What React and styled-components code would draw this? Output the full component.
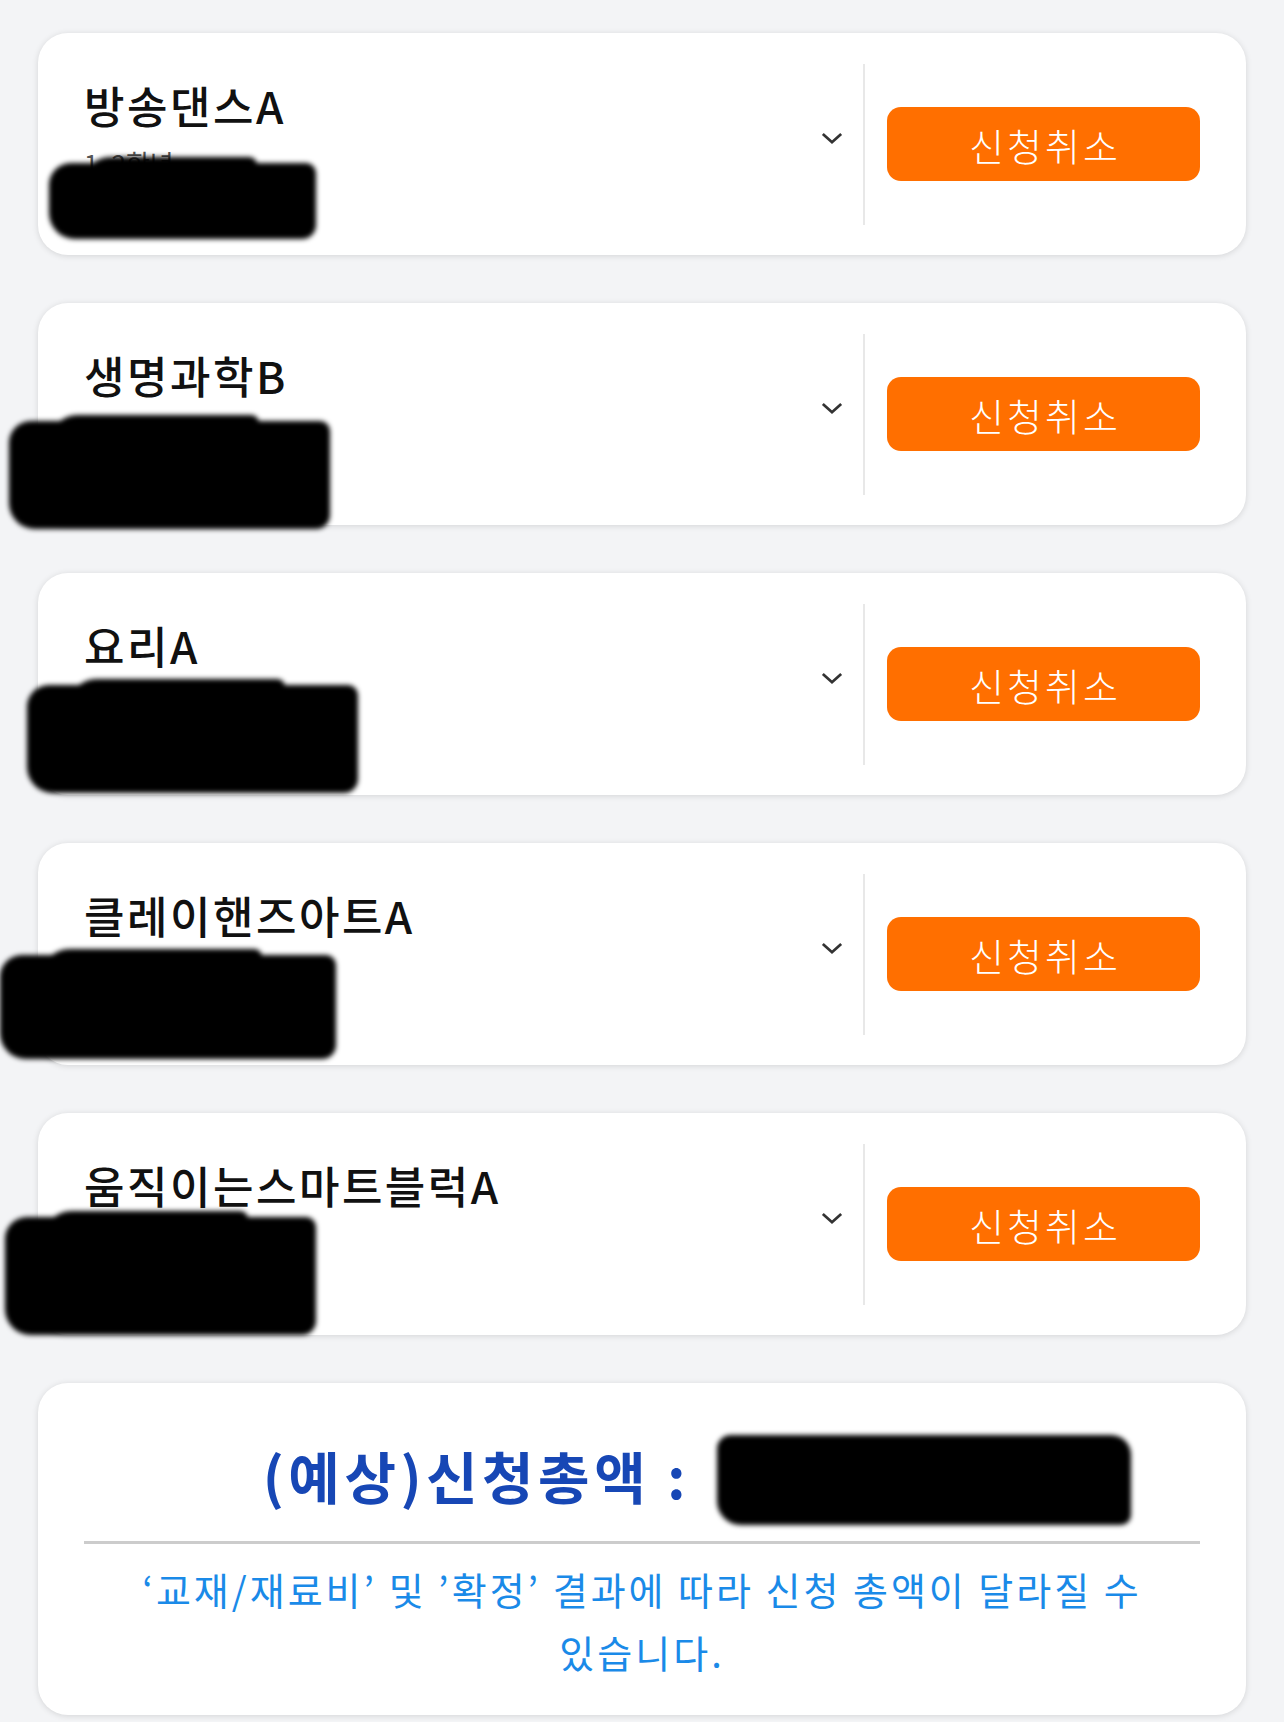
import React from 'react';
import styled, { createGlobalStyle } from 'styled-components';

const GlobalStyle = createGlobalStyle`
  html, body {
    margin: 0;
    padding: 0;
    background: #f3f4f6;
  }
  body {
    font-family: 'Noto Sans CJK KR', 'Noto Sans', sans-serif;
    color: #111;
  }
`;

const courses = [
  { name: '방송댄스A', grade: '1, 2학년', blot: { l: 11, t: 130, w: 267, h: 76 } },
  { name: '생명과학B', grade: '3, 4학년', blot: { l: -29, t: 118, w: 321, h: 108 } },
  { name: '요리A', grade: '1, 2학년', blot: { l: -11, t: 112, w: 331, h: 108 } },
  { name: '클레이핸즈아트A', grade: '1, 2학년', blot: { l: -38, t: 112, w: 336, h: 104 } },
  { name: '움직이는스마트블럭A', grade: '1, 2학년', blot: { l: -33, t: 104, w: 311, h: 118 } },
];

export default function App() {
  return (
    <Page>
      <GlobalStyle />
      {courses.map((c) => (
        <Card key={c.name}>
          <Info>
            <Title>{c.name}</Title>
            <Grade>{c.grade}</Grade>
          </Info>
          <Chevron viewBox='0 0 24 14' aria-hidden>
            <path d='M2 2 L12 11 L22 2' fill='none' stroke='#333' strokeWidth='3' />
          </Chevron>
          <Divider />
          <CancelButton type='button'>신청취소</CancelButton>
          <Blot $l={c.blot.l} $t={c.blot.t} $w={c.blot.w} $h={c.blot.h} />
        </Card>
      ))}
      <Summary>
        <Total>
          (예상)신청총액 : <Amount>000,000원</Amount>
        </Total>
        <Rule />
        <Note>‘교재/재료비’ 및 ’확정’ 결과에 따라 신청 총액이 달라질 수 있습니다.</Note>
      </Summary>
    </Page>
  );
}

const Page = styled.div`
  display: flex;
  flex-direction: column;
  gap: 48px;
  padding: 33px 38px 6px;
`;

const Card = styled.div`
  position: relative;
  display: flex;
  align-items: center;
  height: 222px;
  padding: 0 46px 0 46px;
  background: #fff;
  border-radius: 30px;
  box-shadow: 0 1px 6px rgba(0, 0, 0, 0.13);
  box-sizing: border-box;
`;

const Info = styled.div`
  flex: 1;
  align-self: stretch;
  padding-top: 41px;
`;

const Title = styled.div`
  font-size: 44px;
  line-height: 62px;
  font-weight: 500;
  letter-spacing: 2.5px;
  color: #111;
`;

const Grade = styled.div`
  margin-top: 8px;
  font-size: 26px;
  color: #555;
`;

const Chevron = styled.svg`
  width: 22px;
  height: 13px;
  margin: 0 20px 12px 0;
`;

const Divider = styled.div`
  width: 2px;
  height: 161px;
  background: #e8e8e8;
  margin-right: 22px;
`;

const CancelButton = styled.button`
  width: 313px;
  height: 74px;
  border: 0;
  border-radius: 14px;
  background: #ff6f00;
  color: #fff;
  font-family: inherit;
  font-size: 38px;
  font-weight: 300;
  letter-spacing: 3px;
  text-indent: 3px;
  cursor: pointer;
`;

const Blot = styled.div`
  position: absolute;
  left: ${(p) => p.$l}px;
  top: ${(p) => p.$t}px;
  width: ${(p) => p.$w}px;
  height: ${(p) => p.$h}px;
  background: #000;
  border-radius: 22px 10px 14px 26px;
  filter: blur(2.5px);
  &::after {
    content: '';
    position: absolute;
    left: 12%;
    right: 22%;
    top: -6px;
    height: 40px;
    background: #000;
    border-radius: 30px 8px 0 0;
  }
`;

const Summary = styled.div`
  display: flex;
  flex-direction: column;
  padding: 56px 46px 32px;
  background: #fff;
  border-radius: 30px;
  box-shadow: 0 1px 6px rgba(0, 0, 0, 0.13);
`;

const Total = styled.div`
  text-align: center;
  font-size: 56px;
  line-height: 72px;
  font-weight: 700;
  letter-spacing: 4.5px;
  white-space: nowrap;
  color: #1747b5;
`;

const Amount = styled.span`
  position: relative;
  display: inline-block;
  width: 300px;
  margin-left: 14px;
  overflow: visible;
  white-space: nowrap;
  color: transparent;
  text-align: left;
  &::after {
    content: '';
    position: absolute;
    left: -4px;
    right: -110px;
    top: -4px;
    bottom: -14px;
    background: #000;
    border-radius: 14px 20px 10px 24px;
    filter: blur(2.5px);
  }
`;

const Rule = styled.div`
  height: 3px;
  background: #cccccc;
  margin-top: 30px;
`;

const Note = styled.p`
  margin: 13px 0 0;
  text-align: center;
  font-size: 38px;
  line-height: 63px;
  letter-spacing: 3px;
  word-break: keep-all;
  color: #1a8ae8;
`;
